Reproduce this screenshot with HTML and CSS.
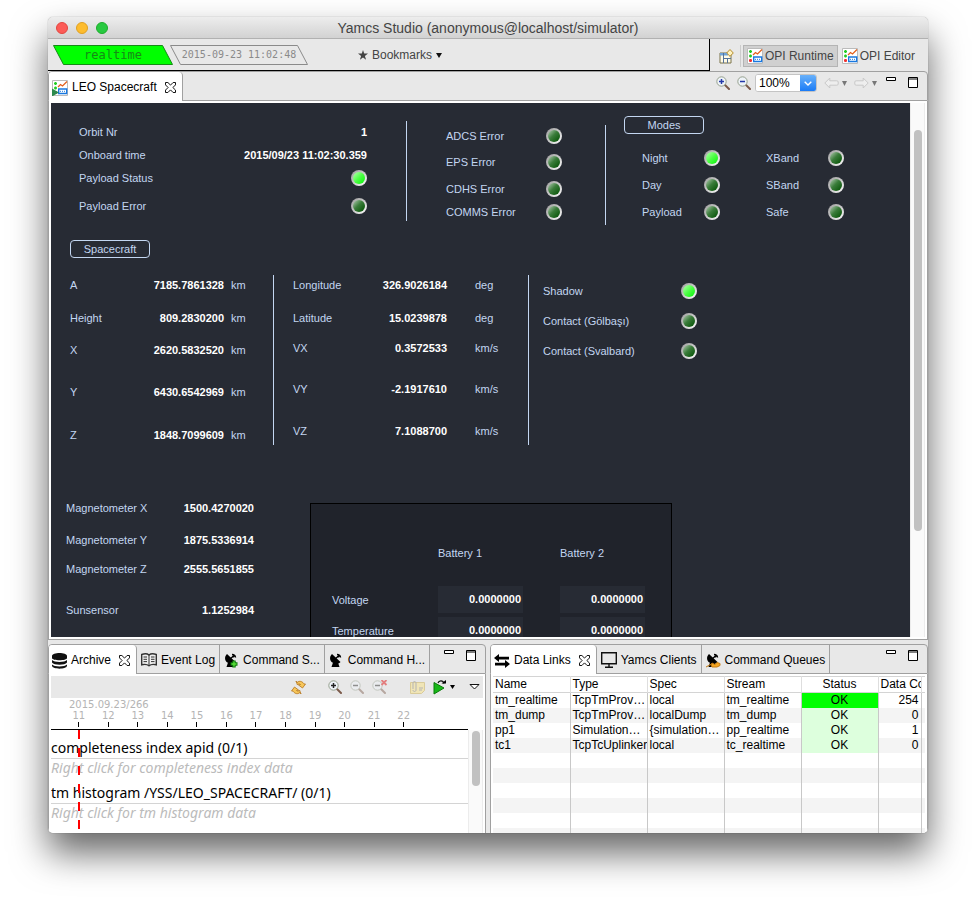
FILE: index.html
```html
<!DOCTYPE html>
<html lang="en">
<head>
<meta charset="utf-8">
<title>Yamcs Studio</title>
<link rel="stylesheet" href="styles.css">
</head>
<body>
<svg class="sprite" aria-hidden="true">
  <symbol id="close" viewBox="0 0 11 11"><path d="M.5.5h2.4l2.6 2.6L8.100.5h2.400v2.400L7.900 5.500l2.600 2.600v2.400H8.100L5.500 7.900 2.900 10.500H.5V8.100l2.600-2.600L.5 2.900z" fill="#fff" stroke="#111"/></symbol>
  <symbol id="minimize" viewBox="0 0 11 12"><path d="M.5.5h9v3h-9z" fill="#fff" stroke="#000"/></symbol>
  <symbol id="maximize" viewBox="0 0 11 12"><path d="M.5.5h9v10h-9zM.5 2h9" fill="#fff" stroke="#000"/></symbol>
  <symbol id="opi" viewBox="0 0 16 16"><path d="M.5.5h15v15H.5z" fill="#fff" stroke="#bbb"/><path d="M3.500 2v3M2 3.500h3M3.500 6.500v3M2 8h3" stroke="#2c2" stroke-width="1.600"/><path d="M2 12.500h3M3.500 11v3" stroke="#e33" stroke-width="1.800"/><path d="M6 7l2.500-2.500 2 1.500L15 1.500" fill="none" stroke="#e4601c" stroke-width="1.300"/><path d="M6.700 9h8v4.500h-8z" fill="#fff" stroke="#1878e0" stroke-width="1.400"/><path d="M8 11.300h6" stroke="#1878e0" stroke-dasharray="1 1"/></symbol>
  <symbol id="opi-run" viewBox="0 0 16 16"><use href="#opi"/><path d="M0 8.500l7 4-7 4z" fill="#2d8a4e"/></symbol>
  <symbol id="lens" viewBox="0 0 14 14"><path d="M9 9l4 4" stroke="#7b5a4a" stroke-width="2" stroke-linecap="round"/><circle cx="5.500" cy="5.500" r="4.700" fill="#eef3f8" stroke="#96a08e"/></symbol>
  <symbol id="dish" viewBox="0 0 15 15"><path d="M3 1C-.5 4 .5 11 8 10.500c1.500 0 2.500-.5 3.500-1.500z"/><path d="M4 9.500h5L10.500 14H2.500z"/><path d="M6 6l3.500-3M8 1.300c2 0 3.300 1 3.600 3.200" fill="none" stroke="#000" stroke-width="1.300"/><circle cx="9.500" cy="3.300" r="1.200"/></symbol>
</svg>

<div class="window">
  <header class="titlebar">
    <div class="lights"><span class="light light--close"></span><span class="light light--min"></span><span class="light light--max"></span></div>
    <h1 class="title">Yamcs Studio (anonymous@localhost/simulator)</h1>
  </header>

  <div class="toolbar">
    <div class="toolbar__main">
      <div class="chips">
        <div class="chip chip--live"><svg class="chip__shape" viewBox="0 0 120 20" preserveAspectRatio="none" aria-hidden="true"><path d="M.5.500h109l10 19h-109z" fill="#00ff00" stroke="#178a17"/></svg><span class="chip__text">realtime</span></div>
        <div class="chip chip--time"><svg class="chip__shape" viewBox="0 0 138 20" preserveAspectRatio="none" aria-hidden="true"><path d="M.5.500h127l10 19h-127z" fill="none" stroke="#8a8a8a"/></svg><span class="chip__text">2015-09-23 11:02:48</span></div>
      </div>
      <button class="bookmarks" type="button">
        <svg width="10" height="10" viewBox="0 0 10 10"><path d="M5 0l1.200 3.600H10L6.900 5.900 8.100 9.700 5 7.400 1.900 9.700l1.200-3.800L0 3.600h3.800z" fill="#444"/></svg>
        Bookmarks
        <svg width="6" height="5" viewBox="0 0 6 5"><path d="M0 0h6L3 5z" fill="#111"/></svg>
      </button>
    </div>
    <nav class="perspectives">
      <button class="icon-button" type="button" aria-label="Open perspective">
        <svg width="15" height="15" viewBox="0 0 15 15"><path d="M1 4h11v10H1z" fill="#fffbe8" stroke="#7a7248"/><path d="M1 4h8v2.500H1z" fill="#6fa3d8"/><path d="M4.500 4v10M4.500 9.500H12M8.500 9.500V14" stroke="#55729a" fill="none"/><path d="M11 .5l3.300 3.500L11 7.300 7.700 4z" fill="#fff3c0" stroke="#b48a28"/></svg>
      </button>
      <span class="perspectives__rule"></span>
      <div class="perspectives__list">
        <button class="perspective perspective--on" type="button"><svg width="16" height="16"><use href="#opi"/></svg>OPI Runtime</button>
        <button class="perspective" type="button"><svg width="16" height="16"><use href="#opi"/></svg>OPI Editor</button>
      </div>
    </nav>
  </div>

  <section class="editor">
    <div class="tabs tabs--editor">
      <button class="tab tab--on" type="button"><svg width="16" height="16"><use href="#opi-run"/></svg>LEO Spacecraft<svg class="tab__close" width="11" height="11"><use href="#close"/></svg></button>
      <div class="tabs__tools">
        <button class="icon-button" type="button" aria-label="Zoom in"><svg width="14" height="14" viewBox="0 0 14 14"><use href="#lens"/><path d="M3 5.500h5M5.500 3v5" stroke="#2438a8" stroke-width="1.500"/></svg></button>
        <button class="icon-button" type="button" aria-label="Zoom out"><svg width="14" height="14" viewBox="0 0 14 14"><use href="#lens"/><path d="M3 5.500h5" stroke="#2438a8" stroke-width="1.500"/></svg></button>
        <label class="combo">
          <select class="combo__field" aria-label="Zoom level"><option>100%</option></select>
          <span class="combo__arrow"><svg width="8" height="5" viewBox="0 0 8 5"><path d="M.7.7L4 4 7.300.7" fill="none" stroke="#fff" stroke-width="1.400"/></svg></span>
        </label>
        <button class="icon-button icon-button--pair" type="button" aria-label="Back"><svg width="15" height="12" viewBox="0 0 15 12"><path d="M.8 6l5-5v2.800h7q1.400 0 1.400 1.200v2q0 1.200-1.400 1.200h-7V11z" fill="#eee" stroke="#c8c8c8"/></svg><svg width="5" height="5" viewBox="0 0 5 5"><path d="M0 0h5L2.500 5z" fill="#777"/></svg></button>
        <button class="icon-button icon-button--pair" type="button" aria-label="Forward"><svg width="15" height="12" viewBox="0 0 15 12"><path d="M14.200 6l-5-5v2.800h-7Q.8 3.800.8 5v2q0 1.200 1.400 1.200h7V11z" fill="#eee" stroke="#c8c8c8"/></svg><svg width="5" height="5" viewBox="0 0 5 5"><path d="M0 0h5L2.500 5z" fill="#777"/></svg></button>
      </div>
      <div class="tabs__window">
        <button class="icon-button" type="button" aria-label="Minimize"><svg width="11" height="12"><use href="#minimize"/></svg></button>
        <button class="icon-button" type="button" aria-label="Maximize"><svg width="11" height="12"><use href="#maximize"/></svg></button>
      </div>
    </div>

    <div class="editor__body">
      <main class="display">
        <div class="strip strip--top">
          <div class="group group--orbit">
            <span>Orbit Nr</span><b>1</b>
            <span>Onboard time</span><b>2015/09/23 11:02:30.359</b>
            <span>Payload Status</span><i class="led led--on"></i>
            <span>Payload Error</span><i class="led"></i>
          </div>
          <div class="rule rule--short"></div>
          <div class="group group--errors">
            <span>ADCS Error</span><i class="led"></i>
            <span>EPS Error</span><i class="led"></i>
            <span>CDHS Error</span><i class="led"></i>
            <span>COMMS Error</span><i class="led"></i>
          </div>
          <div class="rule rule--short rule--modes"></div>
          <div class="modes">
            <h2 class="badge">Modes</h2>
            <div class="group group--modes">
              <span>Night</span><i class="led led--on"></i><span>XBand</span><i class="led"></i>
              <span>Day</span><i class="led"></i><span>SBand</span><i class="led"></i>
              <span>Payload</span><i class="led"></i><span>Safe</span><i class="led"></i>
            </div>
          </div>
        </div>

        <h2 class="badge badge--spacecraft">Spacecraft</h2>

        <div class="strip strip--middle">
          <div class="group group--position">
            <span>A</span><b>7185.7861328</b><span>km</span>
            <span>Height</span><b>809.2830200</b><span>km</span>
            <span>X</span><b>2620.5832520</b><span>km</span>
            <span>Y</span><b>6430.6542969</b><span>km</span>
            <span>Z</span><b>1848.7099609</b><span>km</span>
          </div>
          <div class="rule rule--tall"></div>
          <div class="group group--velocity">
            <span>Longitude</span><b>326.9026184</b><span>deg</span>
            <span>Latitude</span><b>15.0239878</b><span>deg</span>
            <span>VX</span><b>0.3572533</b><span>km/s</span>
            <span>VY</span><b>-2.1917610</b><span>km/s</span>
            <span>VZ</span><b>7.1088700</b><span>km/s</span>
          </div>
          <div class="rule rule--tall"></div>
          <div class="group group--contact">
            <span>Shadow</span><i class="led led--on"></i>
            <span>Contact (Gölbaşı)</span><i class="led"></i>
            <span>Contact (Svalbard)</span><i class="led"></i>
          </div>
        </div>

        <div class="strip strip--bottom">
          <div class="group group--sensors">
            <span>Magnetometer X</span><b>1500.4270020</b>
            <span>Magnetometer Y</span><b>1875.5336914</b>
            <span>Magnetometer Z</span><b>2555.5651855</b>
            <span>Sunsensor</span><b>1.1252984</b>
          </div>
          <div class="power">
            <table class="batteries">
              <colgroup><col class="batteries__name"><col class="batteries__first"><col class="batteries__second"></colgroup>
              <thead><tr><td></td><th scope="col">Battery 1</th><th scope="col">Battery 2</th></tr></thead>
              <tbody>
                <tr><th scope="row">Voltage</th><td><div class="reading">0.0000000</div></td><td><div class="reading">0.0000000</div></td></tr>
                <tr><th scope="row">Temperature</th><td><div class="reading">0.0000000</div></td><td><div class="reading">0.0000000</div></td></tr>
              </tbody>
            </table>
          </div>
        </div>
      </main>
      <div class="scroll scroll--editor"><div class="scroll__thumb"></div></div>
    </div>
  </section>

  <div class="views">
    <section class="view">
      <div class="tabs">
        <button class="tab tab--on" type="button"><svg width="15" height="16" viewBox="0 0 15 16"><path d="M0 3c0-4 15-4 15 0v2c0 3-15 3-15 0zM0 7c2 2.500 13 2.500 15 0v2.500c-2 3-13 3-15 0zM0 11.500c2 2.500 13 2.500 15 0V13c-1 3.500-14 3.500-15 0z" fill="#111"/></svg>Archive<svg class="tab__close" width="11" height="11"><use href="#close"/></svg></button>
        <button class="tab" type="button"><svg width="16" height="14" viewBox="0 0 16 14"><path d="M.7 1.500c3-1 5.500-1 7.300.5 1.800-1.500 4.300-1.500 7.300-.5v10.300c-3-.7-5.500-.5-7.300 1-1.800-1.500-4.300-1.700-7.300-1z" fill="#eee" stroke="#333" stroke-width="1.400"/><path d="M8 2v10M2.500 4h3.500M2.500 6.300h3.500M2.500 8.600h3.500M10 4h3.500M10 6.300h3.500M10 8.600h3.500" stroke="#333"/></svg>Event Log</button>
        <button class="tab" type="button"><svg width="15" height="15" viewBox="0 0 15 15"><use href="#dish"/><path d="M10 7.500v7M6.500 11h7" stroke="#0b7a0b" stroke-width="3.400"/><path d="M10 8.500v5M7.500 11h5" stroke="#5be03a" stroke-width="1.400"/></svg>Command S...</button>
        <button class="tab" type="button"><svg width="15" height="15"><use href="#dish"/></svg>Command H...</button>
        <div class="tabs__window">
          <button class="icon-button" type="button" aria-label="Minimize"><svg width="11" height="12"><use href="#minimize"/></svg></button>
          <button class="icon-button" type="button" aria-label="Maximize"><svg width="11" height="12"><use href="#maximize"/></svg></button>
        </div>
      </div>
      <div class="view__body">
        <div class="actions">
          <button class="icon-button" type="button" aria-label="Refresh"><svg width="15" height="15" viewBox="0 0 15 15"><path d="M5 1l1 1.500C9 0 12 2 13 4l1.500 0-3 4-4-3 2-.5C8.500 3.500 7 4 6.500 5zM10 14l-1-1.500C6 15 3 13 2 11L.5 11l3-4 4 3-2 .5c1 1 2.500.5 3-.5z" fill="#f6c65a" stroke="#b5741a" stroke-width=".8"/></svg></button>
          <div class="actions__set">
            <button class="icon-button" type="button" aria-label="Zoom in"><svg width="14" height="14" viewBox="0 0 14 14"><use href="#lens"/><path d="M3 5.500h5M5.500 3v5" stroke="#222" stroke-width="1.500"/></svg></button>
            <button class="icon-button faded" type="button" aria-label="Zoom out"><svg width="14" height="14" viewBox="0 0 14 14"><use href="#lens"/><path d="M3 5.500h5" stroke="#222" stroke-width="1.500"/></svg></button>
            <button class="icon-button faded" type="button" aria-label="Clear zoom"><svg width="16" height="14" viewBox="0 0 16 14"><use href="#lens" width="14" height="14"/><path d="M3 5.500h5" stroke="#222" stroke-width="1.500"/><path d="M9.500 0l5 5M14.500 0l-5 5" stroke="#d00" stroke-width="1.800"/></svg></button>
          </div>
          <div class="actions__set actions__set--tags">
            <button class="icon-button faded" type="button" aria-label="Tag"><svg width="15" height="14" viewBox="0 0 15 14"><path d="M.5 2.500h14v8l-3 3H.5z" fill="#fbe27a" stroke="#c9a83c"/><path d="M3 9V3c0-2 3-2 3 0v7c0 2-3 2-3 0M9 8h4M9 10h3" fill="none" stroke="#777"/></svg></button>
            <button class="icon-button icon-button--pair" type="button" aria-label="Replay"><svg width="14" height="15" viewBox="0 0 14 15"><path d="M1 2.500l10 5.500-10 6z" fill="#18b818" stroke="#0a7a0a"/><path d="M5 3c1-3 5-3 6 .5" fill="none" stroke="#111" stroke-width="1.200"/><path d="M8.500 3.500h4.500v-3.500z"/></svg><svg width="5" height="4" viewBox="0 0 5 4"><path d="M0 0h5L2.500 4z"/></svg></button>
          </div>
          <button class="icon-button" type="button" aria-label="View menu"><svg width="11" height="6" viewBox="0 0 11 6"><path d="M1 .5h9l-4.500 4.500z" fill="#fff" stroke="#111"/></svg></button>
        </div>
        <div class="axis">
          <div class="axis__date">2015.09.23/266</div>
          <div class="axis__hours"><span>11</span><span>12</span><span>13</span><span>14</span><span>15</span><span>16</span><span>17</span><span>18</span><span>19</span><span>20</span><span>21</span><span>22</span></div>
        </div>
        <div class="archive">
          <div class="archive__rows">
            <div class="track">completeness index apid (0/1)</div>
            <div class="hint">Right click for completeness index data</div>
            <div class="track">tm histogram /YSS/LEO_SPACECRAFT/ (0/1)</div>
            <div class="hint">Right click for tm histogram data</div>
            <div class="locator"></div>
          </div>
          <div class="scroll scroll--archive"><div class="scroll__thumb"></div></div>
        </div>
      </div>
    </section>

    <section class="view">
      <div class="tabs">
        <button class="tab tab--on" type="button"><svg width="16" height="14" viewBox="0 0 16 14"><path d="M0 4l5-4v2.800h10v2.600H5V8zM16 10l-5-4v2.800H1v2.600h10V14z"/></svg>Data Links<svg class="tab__close" width="11" height="11"><use href="#close"/></svg></button>
        <button class="tab" type="button"><svg width="16" height="16" viewBox="0 0 16 16"><path d="M.7.700h14.600v11H.7z" fill="none" stroke="#111" stroke-width="1.400"/><path d="M8 12v3M4 15.300h8" stroke="#111" stroke-width="1.400"/></svg>Yamcs Clients</button>
        <button class="tab" type="button"><svg width="15" height="15" viewBox="0 0 15 15"><use href="#dish"/><path d="M0 14l5.500-3M6 10l3 1.500 2-2 3 1v2l-3 1.500H6l-1-2z" fill="#f5a623" stroke="#c47a10"/></svg>Command Queues</button>
        <div class="tabs__window">
          <button class="icon-button" type="button" aria-label="Minimize"><svg width="11" height="12"><use href="#minimize"/></svg></button>
          <button class="icon-button" type="button" aria-label="Maximize"><svg width="11" height="12"><use href="#maximize"/></svg></button>
        </div>
      </div>
      <div class="view__body view__body--links">
        <table class="links">
          <colgroup><col class="links__col"><col class="links__col"><col class="links__col"><col class="links__col"><col class="links__col"><col class="links__count"><col></colgroup>
          <thead><tr><th scope="col">Name</th><th scope="col">Type</th><th scope="col">Spec</th><th scope="col">Stream</th><th scope="col" class="mid">Status</th><th scope="col">Data Count</th><td></td></tr></thead>
          <tbody>
            <tr><td>tm_realtime</td><td>TcpTmProv…</td><td>local</td><td>tm_realtime</td><td class="mid ok-live">OK</td><td class="num">254</td><td></td></tr>
            <tr><td>tm_dump</td><td>TcpTmProv…</td><td>localDump</td><td>tm_dump</td><td class="mid ok">OK</td><td class="num">0</td><td></td></tr>
            <tr><td>pp1</td><td>Simulation…</td><td>{simulation…</td><td>pp_realtime</td><td class="mid ok">OK</td><td class="num">1</td><td></td></tr>
            <tr><td>tc1</td><td>TcpTcUplinker</td><td>local</td><td>tc_realtime</td><td class="mid ok">OK</td><td class="num">0</td><td></td></tr>
            <tr><td></td><td></td><td></td><td></td><td></td><td></td><td></td></tr>
            <tr><td></td><td></td><td></td><td></td><td></td><td></td><td></td></tr>
            <tr><td></td><td></td><td></td><td></td><td></td><td></td><td></td></tr>
            <tr><td></td><td></td><td></td><td></td><td></td><td></td><td></td></tr>
            <tr><td></td><td></td><td></td><td></td><td></td><td></td><td></td></tr>
            <tr><td></td><td></td><td></td><td></td><td></td><td></td><td></td></tr>
          </tbody>
        </table>
      </div>
    </section>
  </div>
</div>
</body>
</html>
```

FILE: styles.css
```css
* { box-sizing: border-box; }

body {
  margin: 0;
  padding: 17px 48px 74px;
  background: #fff;
  color: #000;
  font: 12px/15px "Liberation Sans", Arial, sans-serif;
}

svg { display: block; flex: none; }
.sprite { position: absolute; width: 0; height: 0; }

button {
  margin: 0;
  padding: 0;
  border: 0;
  background: none;
  color: inherit;
  font: inherit;
  white-space: nowrap;
}

.icon-button { display: flex; align-items: center; }
.icon-button--pair { gap: 3px; }
.faded { opacity: .45; }

/* Window frame */
.window {
  display: flex;
  flex-direction: column;
  height: calc(100vh - 91px);
  border-radius: 5px;
  overflow: hidden;
  background: #e8e8e8;
  box-shadow: 0 0 1px rgba(0, 0, 0, .5), 0 20px 36px rgba(0, 0, 0, .6);
}

.titlebar {
  display: grid;
  grid-template-columns: 1fr auto 1fr;
  align-items: center;
  flex: none;
  height: 22px;
  padding: 0 8px;
  border-bottom: 1px solid #b1b1b1;
  background: linear-gradient(#ededed, #d2d2d2);
}
.lights { display: flex; gap: 8px; }
.light { width: 12px; height: 12px; border-radius: 50%; }
.light--close { background: #fc5b57; border: 1px solid #e2463f; }
.light--min { background: #fdbc2e; border: 1px solid #dfa023; }
.light--max { background: #28c940; border: 1px solid #1dad2b; }
.title { margin: 0; color: #444; font-size: 14px; font-weight: 400; line-height: 20px; }

/* Toolbar */
.toolbar { display: flex; flex: none; height: 32px; }
.toolbar__main {
  display: flex;
  align-items: center;
  gap: 50px;
  flex: 1;
  padding: 1px 0 0 5px;
  border-right: 1px solid #000;
  border-bottom: 1px solid #000;
}
.chips { display: flex; }
.chip {
  position: relative;
  display: flex;
  align-items: center;
  justify-content: center;
  height: 20px;
}
.chip__shape { position: absolute; inset: 0; width: 100%; height: 100%; }
.chip__text { position: relative; }
.chip--live { width: 120px; color: #178a17; font: 12px/16px "DejaVu Sans Mono", monospace; }
.chip--time { width: 138px; margin-left: -3px; color: #8a8a8a; font: 10px/16px "DejaVu Sans Mono", monospace; }
.bookmarks { display: flex; align-items: center; gap: 4px; color: #444; }

.perspectives { display: flex; align-items: center; gap: 6px; padding: 2px 9px 0; color: #444; }
.perspectives__rule { width: 1px; height: 22px; background: #ccc; }
.perspectives__list { display: flex; margin-left: -4px; }
.perspective { display: flex; align-items: center; gap: 2px; height: 22px; padding: 0 3px; border: 1px solid transparent; }
.perspective--on { background: #d0d0d0; border-color: #b4b4b4; }

/* Tab strips */
.tabs {
  display: flex;
  flex: none;
  height: 30px;
  border: 1px solid #a0a0a0;
  border-top-left-radius: 4px;
  border-top-right-radius: 4px;
}
.tab {
  display: flex;
  align-items: center;
  gap: 4px;
  padding: 2px 4px 0;
  border-right: 1px solid #a0a0a0;
}
.tab--on {
  margin-bottom: -1px;
  padding: 2px 6px 0 3px;
  background: #fff;
  border-top-left-radius: 3px;
  border-top-right-radius: 4px;
}
.tab__close { margin-left: 4px; }
.tabs__tools { display: flex; align-items: center; gap: 7px; height: 22px; margin-left: auto; padding-right: 9px; }
.tabs__window { display: flex; align-items: flex-start; gap: 11px; margin-left: auto; padding: 5px 8px 0 0; }
.tabs__tools + .tabs__window { margin-left: 0; }

.combo {
  display: flex;
  height: 18px;
  margin-left: -3px;
  border: 1px solid #c4c4c4;
  border-radius: 3px;
  overflow: hidden;
  background: #fff;
}
.combo__field {
  width: 44px;
  padding: 0 0 0 3px;
  border: 0;
  appearance: none;
  background: #fff;
  color: #000;
  font: 12px/16px "Liberation Sans", Arial, sans-serif;
}
.combo__arrow {
  display: flex;
  align-items: center;
  justify-content: center;
  width: 16px;
  background: linear-gradient(#69b1fa, #1a7bf6);
}

/* Editor */
.editor { display: flex; flex-direction: column; flex: 1; min-height: 0; border-bottom: 1px solid #a0a0a0; }
.editor__body {
  display: flex;
  flex: 1;
  min-height: 0;
  padding: 2px;
  border: 1px solid #a0a0a0;
  border-width: 0 1px;
  background: #fff;
}
.display {
  flex: 1;
  min-width: 0;
  overflow: hidden;
  background: #272b34;
  color: #c3d6f1;
  font-size: 11px;
  line-height: 14px;
}

.scroll { flex: none; background: #fafafa; border: 1px solid #ececec; border-width: 0 1px; }
.scroll__thumb { border-radius: 4px; background: #c1c1c1; }
.scroll--editor { width: 15px; padding: 27px 2px 0 3px; }
.scroll--editor .scroll__thumb { height: 401px; }
.scroll--archive { width: 15px; padding: 1px 2px 0 3px; }
.scroll--archive .scroll__thumb { height: 55px; }

/* Spacecraft display */
.strip { display: flex; align-items: flex-start; }
.strip--top { height: 137px; padding-left: 28px; }
.strip--middle { height: 204px; padding: 12px 0 0 19px; }
.strip--bottom { padding-left: 15px; }

.group { display: grid; flex: none; align-items: center; }
.group b { color: #fff; text-align: right; }
.group--orbit { grid-template: 24px 22px 24px 31px / 110px 178px; margin-top: 17px; }
.group--orbit .led { justify-self: end; }
.group--errors { grid-template: 26px 26px 28px 18px / 100px 16px; margin: 20px 0 0 39px; }
.group--modes { grid-template: repeat(3, 27px) / 62px 62px 62px 16px; margin: 10px 0 0 18px; }
.group--position { grid-template: 30px 36px 28px 56px 30px / 60px 94px 49px; }
.group--position span:nth-child(3n) { padding-left: 7px; }
.group--velocity { grid-template: 30px 36px 24px 58px 26px / 60px 94px 81px; margin-left: 19px; }
.group--velocity span:nth-child(3n) { padding-left: 28px; }
.group--contact { grid-template: repeat(3, 30px) / 138px 16px; margin: 6px 0 0 14px; }
.group--sensors { grid-template: 32px 32px 26px 56px / 108px 80px; margin-top: 30px; }

.rule { flex: none; width: 1px; background: #c3d6f1; }
.rule--short { height: 100px; margin: 18px 0 0 39px; }
.rule--modes { margin: 22px 18px 0 43px; }
.rule--tall { height: 170px; margin-top: 5px; }

.modes { padding-top: 13px; }
.badge {
  width: 80px;
  margin: 0;
  border: 1px solid #c3d6f1;
  border-radius: 4px;
  font-size: 11px;
  font-weight: 400;
  line-height: 16px;
  text-align: center;
}
.badge--spacecraft { margin-left: 19px; }

.led {
  width: 16px;
  height: 16px;
  border: 2px solid transparent;
  border-radius: 50%;
  background:
    linear-gradient(135deg, #9abb9a 10%, #3a7c3a 45%, #0f5a0f 85%) padding-box,
    linear-gradient(135deg, #9c9c9c, #c4c4c4 45%, #fff) border-box;
}
.led--on {
  background:
    linear-gradient(135deg, #a2ff9c 10%, #4dff45 50%, #14f514 90%) padding-box,
    linear-gradient(135deg, #9c9c9c, #c4c4c4 45%, #fff) border-box;
}

.power {
  width: 362px;
  height: 180px;
  margin: 41px 0 0 56px;
  padding: 36px 0 0 21px;
  border: 1px solid #000;
  background: #20232b;
}
.batteries { width: 313px; border-collapse: collapse; table-layout: fixed; }
.batteries__name { width: 106px; }
.batteries__first { width: 122px; }
.batteries__second { width: 85px; }
.batteries th, .batteries td { padding: 0; font-weight: 400; text-align: left; }
.batteries thead th { height: 44px; line-height: 26px; vertical-align: top; }
.batteries tbody tr { height: 31px; }
.reading {
  width: 85px;
  padding-right: 2px;
  background: #272b34;
  color: #fff;
  font-weight: 700;
  line-height: 27px;
  text-align: right;
}

/* Lower views */
.views { display: grid; grid-template-columns: 1fr 1fr; gap: 4px; flex: none; height: 193px; padding-top: 4px; }
.view { display: flex; flex-direction: column; min-width: 0; }
.view__body {
  display: flex;
  flex-direction: column;
  flex: 1;
  min-height: 0;
  padding: 2px;
  border: 1px solid #a0a0a0;
  border-width: 0 1px;
  background: #fff;
}
.view__body--links { overflow: hidden; }

.actions {
  display: flex;
  align-items: center;
  justify-content: flex-end;
  gap: 22px;
  flex: none;
  height: 22px;
  padding-right: 3px;
  background: #e8e8e8;
}
.actions__set { display: flex; gap: 8px; }
.actions > .icon-button:last-child { margin-left: -8px; }

.axis {
  flex: none;
  height: 32px;
  margin-right: 15px;
  padding-top: 1px;
  border-bottom: 1px solid #000;
  color: #b4b4b4;
  font: 10px/12px "DejaVu Sans", sans-serif;
}
.axis__date { height: 11px; padding-left: 18px; }
.axis__hours { display: grid; grid-template-columns: repeat(12, 1fr); width: 85%; margin-left: 13px; text-align: center; }
.axis__hours span::after { content: ""; display: block; width: 1px; height: 5px; margin: 0 auto; background: #000; }

.archive { display: flex; flex: 1; min-height: 0; }
.archive__rows {
  position: relative;
  flex: 1;
  overflow: hidden;
  padding-top: 8px;
  font: 14px/20px "Noto Sans", sans-serif;
  white-space: nowrap;
}
.track { border-bottom: 1px solid #d4d4d4; }
.hint { height: 24px; color: #bbb; font-style: italic; line-height: 18px; }
.locator {
  position: absolute;
  top: 0;
  bottom: 0;
  left: 27px;
  width: 2px;
  background: repeating-linear-gradient(#f00 0 9px, transparent 9px 18px);
}

.links { width: 100%; border-collapse: collapse; table-layout: fixed; border-top: 1px solid #d4d4d4; }
.links__col { width: 77px; }
.links__count { width: 43px; }
.links th, .links td {
  height: 15px;
  padding: 0 2px;
  overflow: hidden;
  border-right: 1px solid #c8c8c8;
  font-weight: 400;
  line-height: 15px;
  text-align: left;
  white-space: nowrap;
}
.links td:last-child { border-right: 0; }
.links thead tr { border-bottom: 1px solid #d4d4d4; }
.links thead th { border-right-color: #dedede; }
.links tbody tr:nth-child(even) { background: #f4f4f4; }
.links .mid { text-align: center; }
.links .num { text-align: right; }
.links .ok { background: #dfd; }
.links .ok-live { background: #0f0; }
```
